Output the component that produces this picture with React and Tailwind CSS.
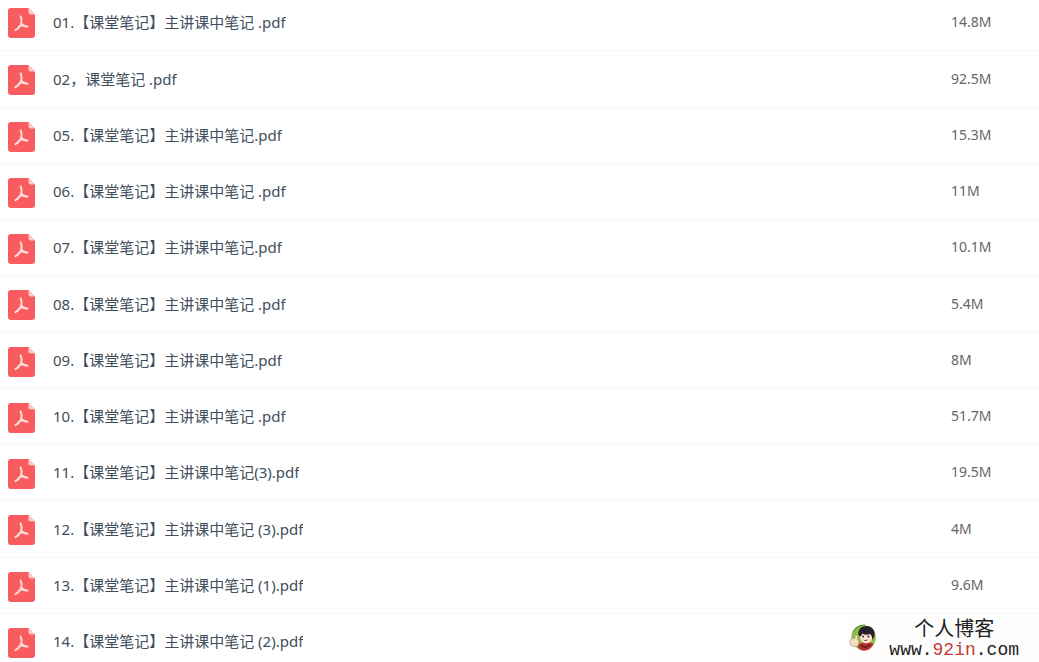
const files = [
  ["01.【课堂笔记】主讲课中笔记 .pdf", "14.8M"],
  ["02，课堂笔记 .pdf", "92.5M"],
  ["05.【课堂笔记】主讲课中笔记.pdf", "15.3M"],
  ["06.【课堂笔记】主讲课中笔记 .pdf", "11M"],
  ["07.【课堂笔记】主讲课中笔记.pdf", "10.1M"],
  ["08.【课堂笔记】主讲课中笔记 .pdf", "5.4M"],
  ["09.【课堂笔记】主讲课中笔记.pdf", "8M"],
  ["10.【课堂笔记】主讲课中笔记 .pdf", "51.7M"],
  ["11.【课堂笔记】主讲课中笔记(3).pdf", "19.5M"],
  ["12.【课堂笔记】主讲课中笔记 (3).pdf", "4M"],
  ["13.【课堂笔记】主讲课中笔记 (1).pdf", "9.6M"],
  ["14.【课堂笔记】主讲课中笔记 (2).pdf", ""],
];

function PdfIcon() {
  return (
    <svg className="mt-[3px] h-[30px] w-[27px] shrink-0" viewBox="0 0 27 30" aria-hidden="true">
      <path d="M3 0H20.5L27 6.5V27a3 3 0 0 1-3 3H3a3 3 0 0 1-3-3V3a3 3 0 0 1 3-3Z" fill="#f95c5f" />
      <path d="M20.5 0 27 6.5h-4.5a2 2 0 0 1-2-2Z" fill="#fdc8c8" />
      <g fill="none" stroke="#ffdcdc" strokeLinecap="round" strokeLinejoin="round">
        <path d="M12.7 8.5c1.1 2.5 1.1 5.5.3 7.9-1.2 2.5-3 4.6-5.6 5.7" strokeWidth="2" />
        <path d="M13.2 15.8c1.5 1.6 3.6 2.6 6.2 2.9" strokeWidth="2" />
        <path d="M10.2 19c2.5-1.1 5.1-1.5 7.6-1.1" strokeWidth="1.3" />
      </g>
    </svg>
  );
}

function Mascot() {
  return (
    <svg className="h-[28px] w-[28px] shrink-0" viewBox="0 0 28 28" aria-hidden="true">
      <circle cx="14.5" cy="13.5" r="12.3" fill="#8fbf45" />
      <path d="M4 8C7 3 11 1 16 1.2" fill="none" stroke="#5f982c" strokeWidth="1.2" />
      <path d="M8.5 21c4-3 11-3.5 16-1.5-1 4-5 7-9.5 7.2-3.5 0-6-2-6.5-5.7Z" fill="#b92c2b" />
      <path d="M12 21.5l4 2 5-3" fill="none" stroke="#4a2020" strokeWidth="1.3" />
      <path d="M11 10c1-2 10-3 12 0 1.3 5-1 9-5.3 9.3C13.5 19.5 10.5 16 11 10Z" fill="#fbe3d2" />
      <path d="M9.5 11C8.5 6 12 2.5 16 2.3c4.500-1 9 2 9.5 6.5.4 3-.5 5.5-2.3 7.2.3-2.5-.5-4.500-2-6-2.7 1-5.7 1-8-.5-.5 2-1.500 3-2.7 3Z" fill="#29202b" />
      <circle cx="14" cy="12.5" r="1" fill="#30252a" />
      <circle cx="19.5" cy="12.5" r="1" fill="#30252a" />
      <path d="M14.5 15.5c1.5.8 3 .7 4.2-.2-.2 2-3.2 2.7-4.2.2Z" fill="#c53b38" />
      <path d="M2 15c1.500-1 3-.8 4-.2V12c0-1.500 2.500-1.500 2.500.3v3.200c1.800 1 1.800 5.500-.5 6.700-3 1-6.500-.2-7-2.700-.3-2 .1-3.500 1-4.500Z" fill="#f6dcc5" stroke="#b59778" strokeWidth=".7" />
    </svg>
  );
}

export default function App() {
  return (
    <main className="relative h-screen overflow-hidden bg-white font-['Noto_Sans','Noto_Sans_CJK_SC',sans-serif] text-[15px] leading-5">
      <table className="-mt-1.5 w-full table-fixed border-collapse">
        <tbody>
          {files.map(([name, size]) => (
            <tr key={name} className="h-14 border-b border-[#f6f7f8] nth-[4n+2]:h-[57px]">
              <td className="p-0 pl-2">
                <div className="flex items-center gap-[18px]">
                  <PdfIcon />
                  <a href="#" className="truncate text-[#424e5c]">{name}</a>
                </div>
              </td>
              <td className="w-[88px] p-0 text-sm text-[#666666]">{size}</td>
            </tr>
          ))}
        </tbody>
      </table>
      <div className="absolute right-0 bottom-0 flex items-center gap-3 bg-[#fdfdfd] pr-5 pb-1">
        <Mascot />
        <div className="flex flex-col items-center gap-1 text-[#222222]">
          <span className="font-['Noto_Sans_CJK_SC',sans-serif] text-xl leading-5">个人博客</span>
          <span className="font-['Liberation_Mono',monospace] text-lg leading-4">
            www.<span className="text-[#c23a36]">92in</span>.com
          </span>
        </div>
      </div>
    </main>
  );
}
